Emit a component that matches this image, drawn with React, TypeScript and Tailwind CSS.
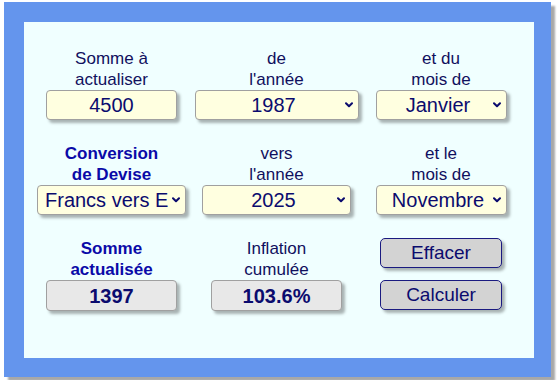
import React from "react";

function Chevron() {
  return (
    <svg width="8" height="6" viewBox="0 0 8 6" fill="none" className="shrink-0 ml-[3px]">
      <path d="M1 1.2 L4 4.2 L7 1.2" stroke="#0b0b6e" strokeWidth="2" strokeLinecap="round" strokeLinejoin="round" />
    </svg>
  );
}

function Label({ lines, bold }: { lines: string[]; bold?: boolean }) {
  return (
    <div
      className={`h-[42px] text-center text-[17px] leading-[21px] ${
        bold ? "font-bold text-[#0a0aa8]" : "text-[#10105e]"
      }`}
    >
      {lines.map((l) => (
        <div key={l}>{l}</div>
      ))}
    </div>
  );
}

function FakeSelect({ value, width, left }: { value: string; width: string; left?: boolean }) {
  return (
    <div
      className={`${width} h-[30px] flex items-center bg-[#ffffe0] border border-[#a0a0a0] rounded-[4px] shadow-[3px_3px_3px_rgba(0,0,0,0.3)] text-[20px] text-[#0b0b6e] pr-[5px] ${
        left ? "pl-[7px]" : "pl-[10px]"
      }`}
    >
      <span className={`flex-1 overflow-hidden whitespace-nowrap ${left ? "text-left" : "text-center"}`}>{value}</span>
      <Chevron />
    </div>
  );
}

function ResultBox({ value }: { value: string }) {
  return (
    <div className="w-[131px] h-[31px] flex items-center justify-center bg-[#e8e8e8] border border-[#a0a0a0] rounded-[4px] shadow-[3px_3px_3px_rgba(0,0,0,0.3)] text-[20px] font-bold text-[#0b0b6e]">
      {value}
    </div>
  );
}

function Btn({ text }: { text: string }) {
  return (
    <button className="w-[122px] h-[30px] flex items-center justify-center bg-[#d3d3d3] border border-[#1a1a80] rounded-[5px] shadow-[3px_3px_3px_rgba(0,0,0,0.3)] text-[19px] text-[#0b0b6e]">
      {text}
    </button>
  );
}

export default function App() {
  return (
    <div className="font-['Liberation_Sans',Arial,sans-serif] bg-white w-[560px] h-[380px] pt-[2px] pl-[4px]">
      <div className="w-[547px] h-[375px] bg-[#6495ed] pt-[20px] pl-[20px] pr-[17px] pb-[19px] shadow-[4px_4px_2px_#a8a8a8]">
        <div className="h-full bg-[#f0ffff] pl-[5px] pt-[26px] grid grid-cols-[165px_165px_164px] grid-rows-[95px_95px_95px] content-start">
          {/* Row 1 */}
          <div className="flex flex-col items-center">
            <Label lines={["Somme à", "actualiser"]} />
            <input
              readOnly
              value="4500"
              className="w-[131px] h-[30px] bg-[#ffffe0] border border-[#a0a0a0] rounded-[4px] shadow-[3px_3px_3px_rgba(0,0,0,0.3)] text-center text-[20px] text-[#0b0b6e] outline-none"
            />
          </div>
          <div className="flex flex-col items-center">
            <Label lines={["de", "l'année"]} />
            <FakeSelect value="1987" width="w-[164px]" />
          </div>
          <div className="flex flex-col items-center">
            <Label lines={["et du", "mois de"]} />
            <FakeSelect value="Janvier" width="w-[131px]" />
          </div>

          {/* Row 2 */}
          <div className="flex flex-col items-center">
            <Label lines={["Conversion", "de Devise"]} bold />
            <FakeSelect value="Francs vers Euros" width="w-[149px]" left />
          </div>
          <div className="flex flex-col items-center">
            <Label lines={["vers", "l'année"]} />
            <FakeSelect value="2025" width="w-[149px]" />
          </div>
          <div className="flex flex-col items-center">
            <Label lines={["et le", "mois de"]} />
            <FakeSelect value="Novembre" width="w-[131px]" />
          </div>

          {/* Row 3 */}
          <div className="flex flex-col items-center">
            <Label lines={["Somme", "actualisée"]} bold />
            <ResultBox value="1397" />
          </div>
          <div className="flex flex-col items-center">
            <Label lines={["Inflation", "cumulée"]} />
            <ResultBox value="103.6%" />
          </div>
          <div className="flex flex-col items-center gap-[12px]">
            <Btn text="Effacer" />
            <Btn text="Calculer" />
          </div>
        </div>
      </div>
    </div>
  );
}
